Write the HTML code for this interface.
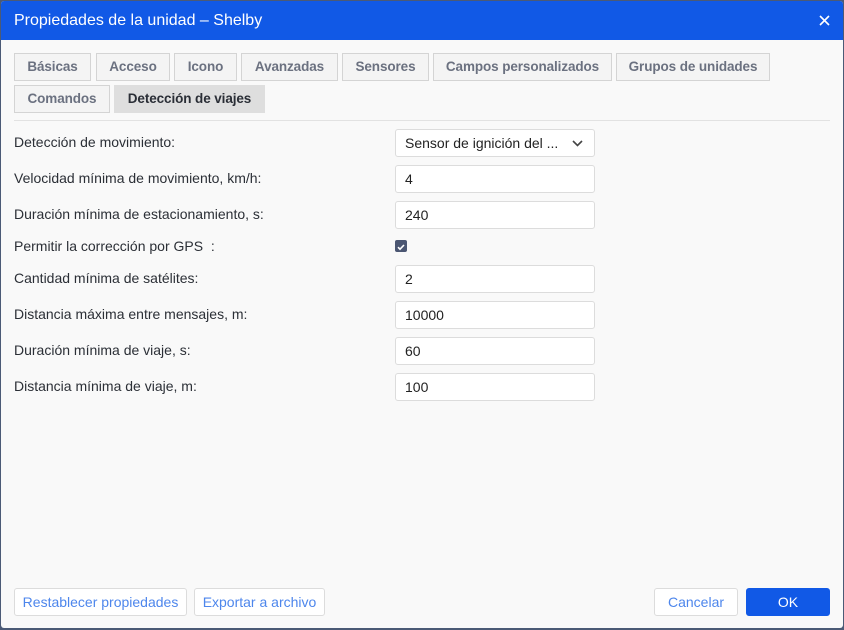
<!DOCTYPE html>
<html><head><meta charset="utf-8"><style>
*{box-sizing:border-box;margin:0;padding:0}
body{width:844px;height:630px;background:#4b5a76;font-family:"Liberation Sans",sans-serif;position:relative;overflow:hidden}
.dlg{position:absolute;left:1px;top:1px;width:842px;height:627px;background:#f9f9f9;border-radius:3px;overflow:hidden}
.title{position:absolute;left:0;top:0;width:842px;height:39px;background:#1159e6;color:#fff;font-size:16px;line-height:39px;padding-left:13px}
.close{position:absolute;right:13px;top:14px;width:11px;height:11px}
.tab{position:absolute;height:28px;border:1px solid #d4d4d4;background:#f4f4f4;color:#6b7180;font-weight:bold;font-size:13.5px;line-height:26px;text-align:center;white-space:nowrap;letter-spacing:-0.1px}
.tab.act{background:#dedede;border-color:#dedede;color:#2a2e36}
.sep{position:absolute;left:13px;top:119px;width:816px;height:1px;background:#e2e2e2}
.lbl{position:absolute;left:13px;font-size:14px;color:#2b2f36}
.inp{position:absolute;left:394px;width:200px;height:28px;background:#fff;border:1px solid #dcdcdc;border-radius:3px;font-size:14px;color:#222;line-height:26px;padding-left:9px}
.btn{position:absolute;top:587px;height:28px;border:1px solid #dcdcdc;border-radius:3px;background:#fff;color:#4d86ec;font-size:14px;line-height:26px;text-align:center}
</style></head><body><div class="dlg">
<div class="title">Propiedades de la unidad – Shelby
<svg class="close" viewBox="0 0 11 11"><path d="M1 1L10 10M10 1L1 10" stroke="#fff" stroke-width="1.6"/></svg></div>
<div class="tab" style="left:13px;top:52px;width:77px">Básicas</div>
<div class="tab" style="left:95px;top:52px;width:74px">Acceso</div>
<div class="tab" style="left:173px;top:52px;width:63px">Icono</div>
<div class="tab" style="left:240px;top:52px;width:97px">Avanzadas</div>
<div class="tab" style="left:341px;top:52px;width:87px">Sensores</div>
<div class="tab" style="left:432px;top:52px;width:179px">Campos personalizados</div>
<div class="tab" style="left:615px;top:52px;width:154px">Grupos de unidades</div>
<div class="tab" style="left:13px;top:84px;width:96px">Comandos</div>
<div class="tab act" style="left:113px;top:84px;width:151px">Detección de viajes</div>
<div class="sep"></div>
<div class="lbl" style="top:133px">Detección de movimiento:</div>
<div class="inp" style="top:128px">Sensor de ignición del ...
<svg style="position:absolute;right:11px;top:10px" width="11" height="7" viewBox="0 0 11 7"><path d="M1 1L5.5 5.5L10 1" stroke="#444" stroke-width="1.6" fill="none"/></svg></div>
<div class="lbl" style="top:169px">Velocidad mínima de movimiento, km/h:</div>
<div class="inp" style="top:164px">4</div>
<div class="lbl" style="top:205px">Duración mínima de estacionamiento, s:</div>
<div class="inp" style="top:200px">240</div>
<div class="lbl" style="top:237px">Permitir la corrección por GPS&nbsp; :</div>
<div style="position:absolute;left:394px;top:239px;width:12px;height:12px;background:#4b5672;border-radius:2px"><svg width="12" height="12" viewBox="0 0 12 12"><path d="M3 6.2L5 8.2L9 4" stroke="#fff" stroke-width="1.6" fill="none"/></svg></div>
<div class="lbl" style="top:269px">Cantidad mínima de satélites:</div>
<div class="inp" style="top:264px">2</div>
<div class="lbl" style="top:305px">Distancia máxima entre mensajes, m:</div>
<div class="inp" style="top:300px">10000</div>
<div class="lbl" style="top:341px">Duración mínima de viaje, s:</div>
<div class="inp" style="top:336px">60</div>
<div class="lbl" style="top:377px">Distancia mínima de viaje, m:</div>
<div class="inp" style="top:372px">100</div>
<div class="btn" style="left:13px;width:173px">Restablecer propiedades</div>
<div class="btn" style="left:193px;width:131px">Exportar a archivo</div>
<div class="btn" style="left:653px;width:84px">Cancelar</div>
<div class="btn" style="left:745px;width:84px;background:#1159e6;border-color:#1159e6;color:#fff">OK</div>
</div></body></html>
